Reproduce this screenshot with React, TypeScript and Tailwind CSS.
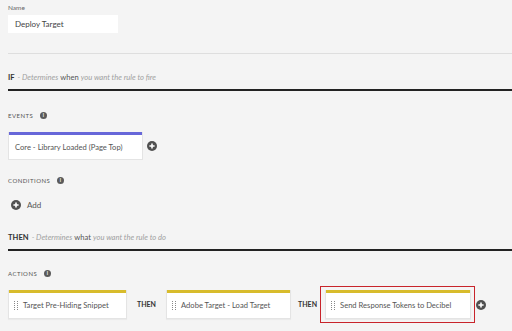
import { Fragment } from 'react';

const font = { fontFamily: 'Lato, "Open Sans", sans-serif' };

function Info() {
  return (
    <span className="ml-[7px] inline-flex h-[7px] w-[7px] items-center justify-center rounded-full bg-[#5a5a5a] text-[5px] font-bold leading-none text-white">i</span>
  );
}

function PlusCircle({ className = '' }: { className?: string }) {
  return (
    <svg width="10" height="10" viewBox="0 0 10 10" className={`shrink-0 ${className}`}>
      <circle cx="5" cy="5" r="5" fill="#505050" />
      <path d="M5 2.4v5.2M2.4 5h5.2" stroke="#fff" strokeWidth="1.6" />
    </svg>
  );
}

function Grip() {
  return (
    <svg width="4" height="10" viewBox="0 0 4 10" className="shrink-0">
      {[0, 2, 4, 6, 8].map((y) => (
        <Fragment key={y}>
          <rect x="0" y={y} width="1" height="1" fill="#888" />
          <rect x="3" y={y} width="1" height="1" fill="#888" />
        </Fragment>
      ))}
    </svg>
  );
}

function SectionLabel({ text }: { text: string }) {
  return (
    <div className="flex h-[10px] items-center text-[6px] tracking-[0.08em] text-[#555]">
      {text}
      <Info />
    </div>
  );
}

function ActionCard({ title, width }: { title: string; width: string }) {
  return (
    <div className={`${width} h-[29px] shrink-0 border border-[#e4e4e4] border-t-0 bg-white shadow-[0_1px_1px_rgba(0,0,0,0.04)]`}>
      <div className="h-[3px] bg-[#d8bc2c]" />
      <div className="flex h-[26px] items-center gap-[5px] whitespace-nowrap pl-[5px] text-[7.6px] text-[#555]">
        <Grip />
        <span>{title}</span>
      </div>
    </div>
  );
}

function Heading({ word, hint, strong, rest }: { word: string; hint: string; strong: string; rest: string }) {
  return (
    <div>
      <div className="flex h-[12px] items-center whitespace-nowrap text-[7.6px] text-[#a0a0a0]">
        <span className="font-bold text-[#333]">{word}</span>
        <span className="ml-[3px] italic">- {hint}</span>
        <span className="mx-[2px] text-[#555]">{strong}</span>
        <span className="italic">{rest}</span>
      </div>
      <div className="mt-[5px] h-[2px] bg-[#222]" />
    </div>
  );
}

export default function App() {
  return (
    <div className="h-[331px] w-[512px] overflow-hidden bg-[#f4f4f4] pl-[8px] pt-[3px]" style={font}>
      <div className="h-[9px] text-[6.5px] leading-[9px] text-[#666]">Name</div>
      <div className="mt-[3px] flex h-[18px] w-[110px] items-center bg-white pl-[7px] text-[8px] text-[#444]">Deploy Target</div>

      <div className="mt-[20px] h-px bg-[#dedede]" />

      <div className="mt-[18px]">
        <Heading word="IF" hint="Determines" strong="when" rest="you want the rule to fire" />
      </div>

      <div className="mt-[19px]">
        <SectionLabel text="EVENTS" />
      </div>
      <div className="mt-[12px] flex items-center">
        <div className="h-[28px] w-[135px] border border-t-0 border-[#e4e4e4] bg-white">
          <div className="h-[3px] bg-[#6767d9]" />
          <div className="flex h-[25px] items-center whitespace-nowrap pl-[6px] text-[7.6px] text-[#555]">Core - Library Loaded (Page Top)</div>
        </div>
        <PlusCircle className="ml-[4px]" />
      </div>

      <div className="mt-[15px]">
        <SectionLabel text="CONDITIONS" />
      </div>
      <div className="mt-[14px] flex items-center pl-[3px] text-[8px] text-[#555]">
        <PlusCircle />
        <span className="ml-[6px]">Add</span>
      </div>

      <div className="mt-[21px]">
        <Heading word="THEN" hint="Determines" strong="what" rest="you want the rule to do" />
      </div>

      <div className="mt-[17px]">
        <SectionLabel text="ACTIONS" />
      </div>
      <div className="mt-[8px] flex items-center">
        <ActionCard title="Target Pre-Hiding Snippet" width="w-[119px]" />
        <span className="mx-[10px] text-[7px] font-bold text-[#333]">THEN</span>
        <ActionCard title="Adobe Target - Load Target" width="w-[125px]" />
        <span className="ml-[7px] mr-[3px] text-[7px] font-bold text-[#333]">THEN</span>
        <div className="border border-[#c8242b] py-[3px] pl-[4px] pr-[3px]">
          <ActionCard title="Send Response Tokens to Decibel" width="w-[146px]" />
        </div>
        <PlusCircle className="ml-[1px]" />
      </div>
    </div>
  );
}
